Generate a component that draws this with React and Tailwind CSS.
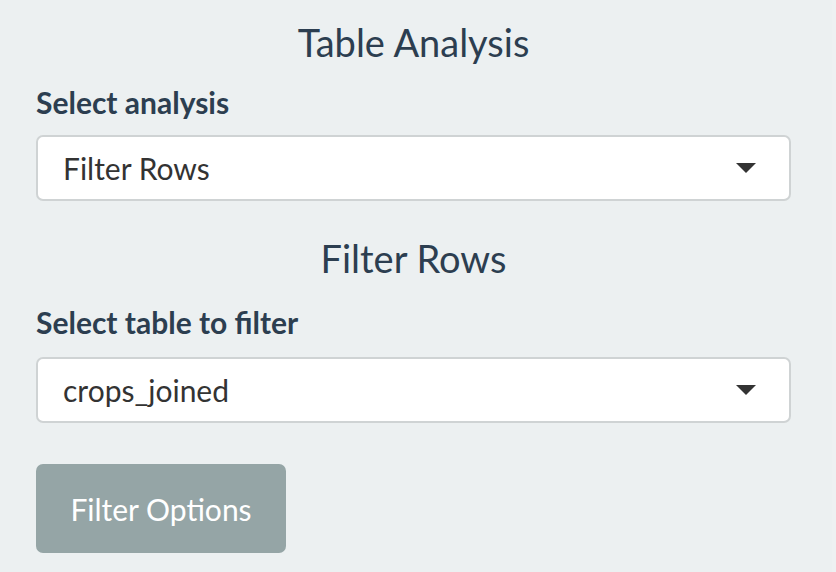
export default function App() {
  const font = { fontFamily: 'Lato, "Open Sans", sans-serif' };

  const Select = ({ value }) => (
    <div className="flex h-[66px] items-center justify-between rounded-[7px] border-2 border-[#cfd3d4] bg-white pl-[25px] pr-[33px]">
      <span className="text-[30px] leading-[36px] text-[#333333]">{value}</span>
      <svg width="20" height="10" viewBox="0 0 20 10">
        <path d="M0 0 H20 L10 10 Z" fill="#333333" />
      </svg>
    </div>
  );

  return (
    <div className="flex h-[572px] w-[836px] bg-[#ecf0f1]" style={font}>
      <div className="w-[832px] pl-[36px] pr-[41px] text-[#2c3e50]">
        <h3 className="mt-[19px] text-center text-[38px] leading-[46px] font-normal">Table Analysis</h3>
        <label className="mt-[19px] block text-[30px] leading-[36px] font-bold">Select analysis</label>
        <div className="mt-[15px]">
          <Select value="Filter Rows" />
        </div>

        <h3 className="mt-[34px] text-center text-[38px] leading-[46px] font-normal">Filter Rows</h3>
        <label className="mt-[23px] block text-[30px] leading-[36px] font-bold">Select table to filter</label>
        <div className="mt-[17px]">
          <Select value="crops_joined" />
        </div>

        <button className="mt-[41px] flex h-[89px] w-[250px] items-center justify-center rounded-[7px] bg-[#95a5a6] text-[30px] leading-[36px] text-white">
          Filter Options
        </button>
      </div>
      <div className="w-[4px] bg-[#eef1f2]" />
    </div>
  );
}
